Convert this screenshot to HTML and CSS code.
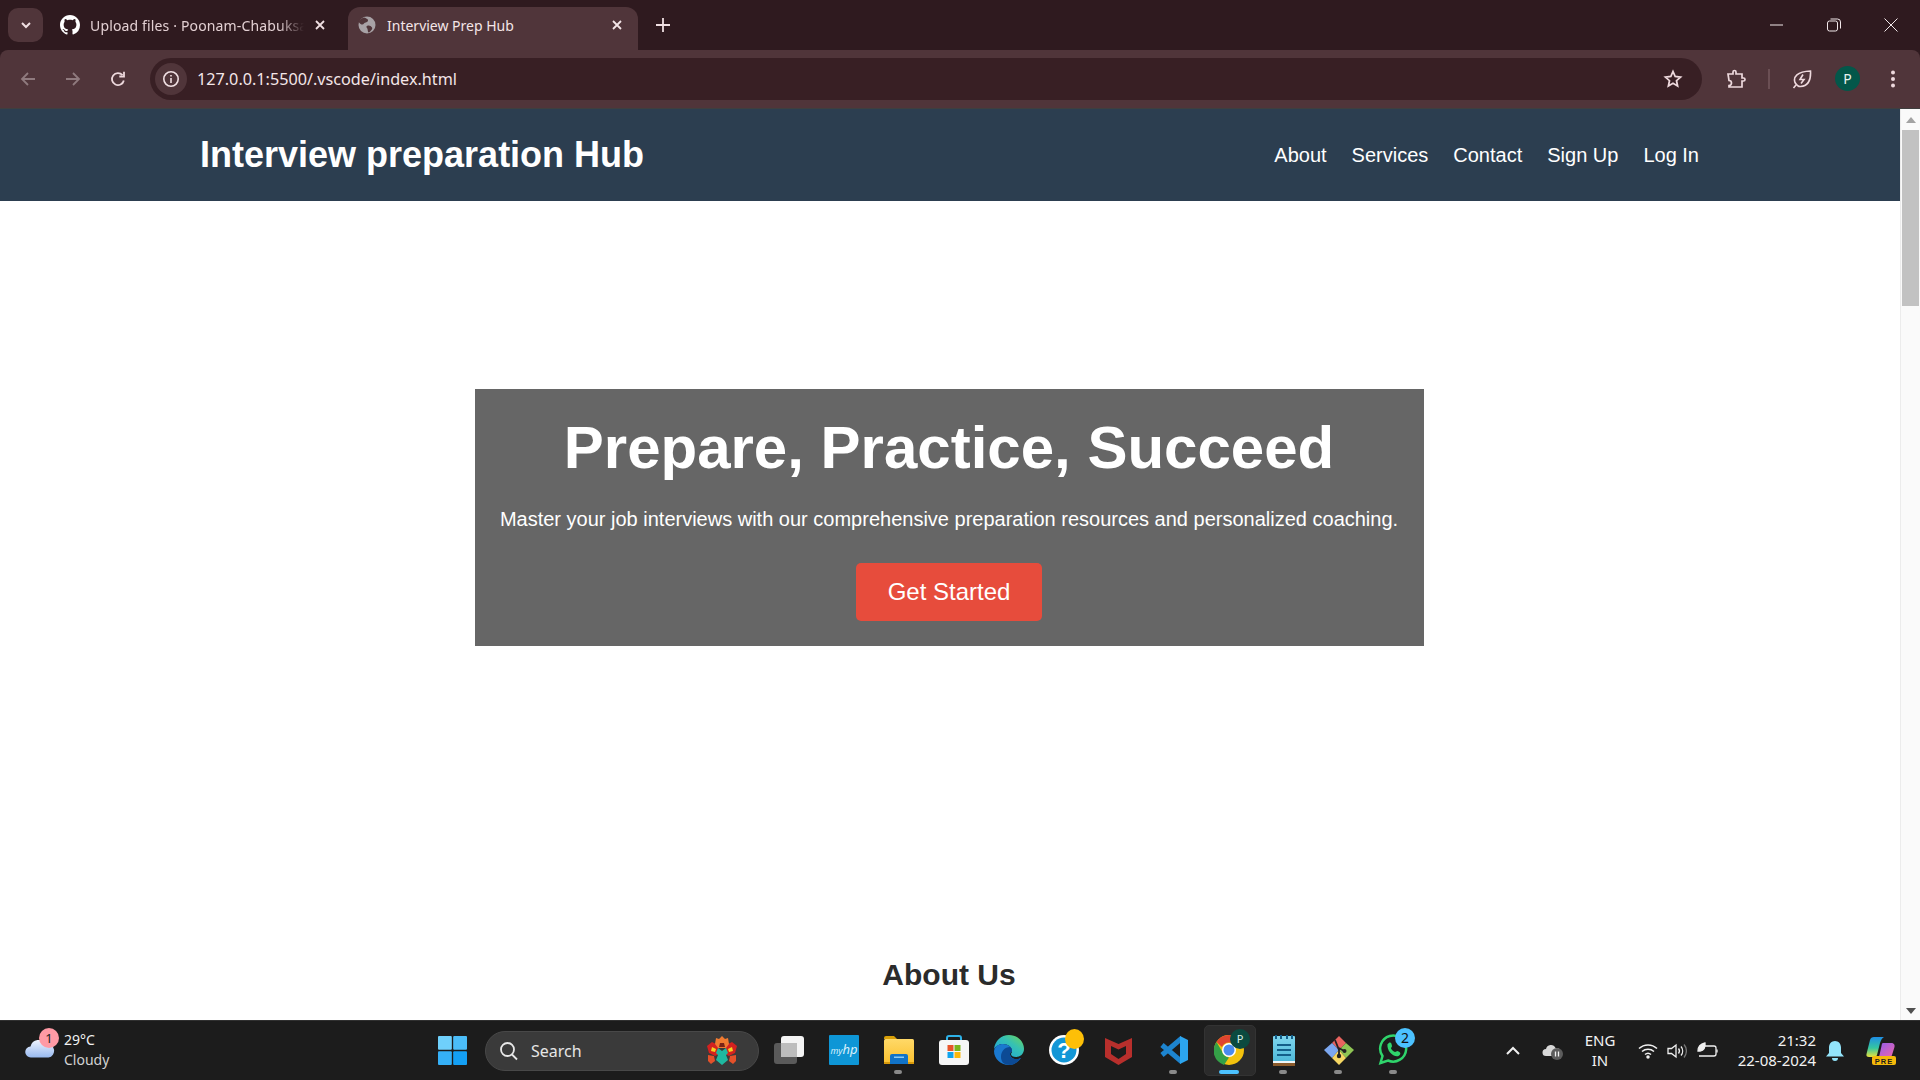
FILE: index.html
```html
<!DOCTYPE html>
<html lang="en">

<head>
    <meta charset="UTF-8">
    <title>Interview Prep Hub</title>
    <link rel="stylesheet" href="styles.css">
</head>

<body>
    <div class="tabstrip">
        <button class="tab-list">
            <svg width="14" height="14" viewBox="0 0 14 14" fill="none" stroke="#f0dfe2" stroke-width="2"><path d="M3 5l4 4 4-4" /></svg>
        </button>
        <div class="tab">
            <svg class="favicon" width="20" height="20" viewBox="0 0 16 16" fill="#fff"><path d="M8 0C3.58 0 0 3.58 0 8c0 3.54 2.29 6.53 5.47 7.59.4.07.55-.17.55-.38 0-.19-.01-.82-.01-1.49-2.01.37-2.53-.49-2.69-.94-.09-.23-.48-.94-.82-1.13-.28-.15-.68-.52-.01-.53.63-.01 1.08.58 1.23.82.72 1.21 1.87.87 2.33.66.07-.52.28-.87.51-1.07-1.78-.2-3.64-.89-3.64-3.95 0-.87.31-1.59.82-2.15-.08-.2-.36-1.02.08-2.12 0 0 .67-.21 2.2.82.64-.18 1.32-.27 2-.27s1.36.09 2 .27c1.53-1.04 2.2-.82 2.2-.82.44 1.1.16 1.92.08 2.12.51.56.82 1.27.82 2.15 0 3.07-1.87 3.75-3.65 3.95.29.25.54.73.54 1.48 0 1.07-.01 1.93-.01 2.2 0 .21.15.46.55.38A8.01 8.01 0 0 0 16 8c0-4.42-3.58-8-8-8z" /></svg>
            <span class="tab-title tab-title-faded">Upload files · Poonam-Chabuksar</span>
            <svg class="tab-close" width="12" height="12" viewBox="0 0 12 12" stroke="#f0dfe2" stroke-width="1.8"><path d="M2 2l8 8M10 2l-8 8" /></svg>
        </div>
        <div class="tab tab-active">
            <svg class="favicon" width="18" height="18" viewBox="0 0 18 18"><circle cx="9" cy="9" r="8.500" fill="#a8a2a6" /><path d="M6 1.500c2 1 4 1 4 3S7 6 6 7.500 3.500 9 1.500 7 3 2.500 6 1.500zM9 10c2-1 4 0 5 1.500s-1 3.500-3 5c-1.500 0-1-2-1.500-3.500S7.500 11 9 10z" fill="#50353a" /></svg>
            <span class="tab-title">Interview Prep Hub</span>
            <svg class="tab-close" width="12" height="12" viewBox="0 0 12 12" stroke="#f4e6e8" stroke-width="1.8"><path d="M2 2l8 8M10 2l-8 8" /></svg>
        </div>
        <svg class="new-tab" width="14" height="14" viewBox="0 0 14 14" stroke="#f0dfe2" stroke-width="1.8"><path d="M7 0v14M0 7h14" /></svg>
        <div class="window-controls">
            <svg width="14" height="14" viewBox="0 0 14 14" stroke="#f2e8ea" stroke-width="1"><path d="M0 7h13" /></svg>
            <svg width="14" height="14" viewBox="0 0 14 14" fill="none" stroke="#f2e8ea" stroke-width="1"><rect x=".5" y="3" width="10" height="10" rx="2" /><path d="M3.500 1h7a3 3 0 0 1 3 3v6.500" /></svg>
            <svg width="14" height="14" viewBox="0 0 14 14" stroke="#f2e8ea" stroke-width="1"><path d="M.5.5l13 13M13.500.5l-13 13" /></svg>
        </div>
    </div>

    <div class="toolbar">
        <div class="nav-buttons">
            <svg width="18" height="18" viewBox="0 0 18 18" fill="none" stroke="#8f7a7e" stroke-width="1.800"><path d="M16 9H3M9 3L3 9l6 6" /></svg>
            <svg width="18" height="18" viewBox="0 0 18 18" fill="none" stroke="#8f7a7e" stroke-width="1.800"><path d="M2 9h13M9 3l6 6-6 6" /></svg>
            <svg width="18" height="18" viewBox="0 0 18 18" fill="none" stroke="#eed9dd" stroke-width="1.800"><path d="M14.800 10.500a6 6 0 1 1-1.300-5.300" /><path d="M15 1.800v4.700h-4.700" /></svg>
        </div>
        <div class="omnibox">
            <span class="site-info">
                <svg width="18" height="18" viewBox="0 0 18 18" fill="none" stroke="#f0dfe2" stroke-width="1.600"><circle cx="9" cy="9" r="7.200" /><path d="M9 8v5M9 5v1.600" /></svg>
            </span>
            <span class="url">127.0.0.1:5500/.vscode/index.html</span>
            <svg class="star" width="20" height="20" viewBox="0 0 20 20" fill="none" stroke="#eed9dd" stroke-width="1.800"><path d="M10 2.500l2.200 5 5.300.6-4 3.600 1.100 5.300-4.600-2.700-4.600 2.700 1.100-5.300-4-3.600 5.300-.6z" /></svg>
        </div>
        <div class="toolbar-actions">
            <svg class="puzzle" width="20" height="20" viewBox="0 0 20 20" fill="none" stroke="#eed9dd" stroke-width="1.700"><path d="M2 5h5V3a1.500 1.500 0 0 1 3 0v2h6v4h1.500a1.500 1.500 0 0 1 0 3H16v6H3v-1.500c1.500 0 2.500-1 2.500-2.500S4.500 11.500 3 11.500z" /></svg>
            <span class="toolbar-divider"></span>
            <svg class="leaf" width="20" height="20" viewBox="0 0 20 20" fill="none" stroke="#eed9dd" stroke-width="1.600"><path d="M3 13.500C1 8 5 2.500 18.500 2c.5 8-2 15-10 15.500-2 .1-3.500-.5-5.500-4z" /><path d="M1.500 19l2.500-3M11 5.500l-3 5h4l-3 4" /></svg>
            <span class="avatar">P</span>
            <svg class="dots" width="6" height="20" viewBox="0 0 6 20" fill="#eed9dd"><circle cx="3" cy="3.500" r="2" /><circle cx="3" cy="10" r="2" /><circle cx="3" cy="16.500" r="2" /></svg>
        </div>
    </div>

    <div class="viewport">
        <div class="page">
            <header class="site-header">
                <div class="header-inner">
                    <h1 class="logo">Interview preparation Hub</h1>
                    <nav class="site-nav">
                        <a href="#">About</a>
                        <a href="#">Services</a>
                        <a href="#">Contact</a>
                        <a href="#">Sign Up</a>
                        <a href="#">Log In</a>
                    </nav>
                </div>
            </header>
            <section class="hero">
                <div class="hero-box">
                    <h2>Prepare, Practice, Succeed</h2>
                    <p>Master your job interviews with our comprehensive preparation resources and personalized coaching.</p>
                    <a class="btn" href="#">Get Started</a>
                </div>
            </section>
            <section class="about">
                <h2>About Us</h2>
            </section>
        </div>
        <div class="scrollbar">
            <span class="arrow-up"></span>
            <span class="thumb"></span>
            <span class="arrow-down"></span>
        </div>
    </div>

    <div class="taskbar">
        <div class="weather">
            <svg class="weather-icon" width="30" height="20" viewBox="0 0 30 20">
                <defs>
                    <linearGradient id="cloudFill" x1="0" y1="0" x2="0" y2="1">
                        <stop offset="0" stop-color="#eef4ff" />
                        <stop offset="1" stop-color="#98b9ef" />
                    </linearGradient>
                </defs>
                <path d="M6 19.500a5.500 5.500 0 0 1-.5-11A8.500 8.500 0 0 1 21 6a6.800 6.800 0 0 1 2.500 13.500z" fill="url(#cloudFill)" />
            </svg>
            <span class="weather-badge">1</span>
            <div class="weather-text">
                <span>29°C</span>
                <span class="weather-desc">Cloudy</span>
            </div>
        </div>
        <div class="start">
            <svg width="29" height="29" viewBox="0 0 30 30">
                <rect width="14.300" height="14.300" rx="1" fill="#6fd0fb" />
                <rect x="15.700" width="14.300" height="14.300" rx="1" fill="#4bbdf8" />
                <rect y="15.700" width="14.300" height="14.300" rx="1" fill="#35b0f7" />
                <rect x="15.700" y="15.700" width="14.300" height="14.300" rx="1" fill="#14a0f5" />
            </svg>
        </div>
        <div class="search">
            <svg width="20" height="20" viewBox="0 0 20 20" fill="none" stroke="#e8e8e8" stroke-width="1.800"><circle cx="8.500" cy="8.500" r="6.500" /><path d="M13 13.500l5 5" /></svg>
            <span>Search</span>
            <svg class="doodle" width="34" height="30" viewBox="0 0 34 30">
                <path d="M2 10l5-4 6 3 1 9-4 2-6-3z" fill="#d3211f" />
                <path d="M32 10l-5-4-6 3-1 9 4 2 6-3z" fill="#d3211f" />
                <path d="M11 2l3 1 3-3 3 3 3-1 1 6-3 4h-8l-3-4z" fill="#f07a30" />
                <path d="M15 7h4l1 4h-6z" fill="#7a2316" />
                <path d="M7 11l4 2-1 3-4-1z" fill="#f6d21f" />
                <path d="M27 11l-4 2 1 3 4-1z" fill="#f6d21f" />
                <path d="M13 12l4 3 4-3 2 5-2 2 2 5-6 5-6-5 2-5-2-2z" fill="#1fb8a0" />
                <path d="M3 19l6 1 1 5-4 3-3-3z" fill="#e4512a" />
                <path d="M31 19l-6 1-1 5 4 3 3-3z" fill="#e4512a" />
            </svg>
        </div>
        <div class="apps">
            <div class="app">
                <svg width="30" height="28" viewBox="0 0 30 28">
                    <rect x="0" y="7" width="23" height="21" rx="3" fill="#5a5a5a" />
                    <rect x="7" y="0" width="23" height="21" rx="3" fill="#f4f4f4" />
                    <rect x="7" y="7" width="16" height="14" fill="#bdbdbd" />
                </svg>
            </div>
            <div class="app">
                <svg width="30" height="30" viewBox="0 0 30 30"><rect width="30" height="30" rx="1" fill="#0e96d6" /><text x="15" y="19" class="myhp">my<tspan class="myhp-hp">hp</tspan></text></svg>
            </div>
            <div class="app app-open">
                <svg width="30" height="28" viewBox="0 0 30 28">
                    <defs>
                        <linearGradient id="folderFill" x1="0" y1="0" x2="0" y2="1">
                            <stop offset="0" stop-color="#ffd968" />
                            <stop offset="1" stop-color="#fbc02d" />
                        </linearGradient>
                    </defs>
                    <path d="M0 2a2 2 0 0 1 2-2h8l3 3h-13z" fill="#d9a008" />
                    <rect y="3" width="30" height="25" rx="1.500" fill="url(#folderFill)" />
                    <rect y="26" width="30" height="2" fill="#d99a0b" />
                    <path d="M6 20a2 2 0 0 1 2-2h14a2 2 0 0 1 2 2v8H6z" fill="#1173c8" />
                    <rect x="10" y="20.500" width="10" height="1.500" fill="#8ccbf3" />
                </svg>
                <span class="app-dot"></span>
            </div>
            <div class="app">
                <svg width="30" height="30" viewBox="0 0 30 30">
                    <path d="M8 8V3a2 2 0 0 1 2-2h10a2 2 0 0 1 2 2v5" fill="none" stroke="#2eb2e8" stroke-width="2" />
                    <rect y="5" width="30" height="25" rx="3" fill="#f6f6f6" />
                    <rect x="8.500" y="10" width="6" height="6" fill="#e8542a" />
                    <rect x="15.500" y="10" width="6" height="6" fill="#7ab51d" />
                    <rect x="8.500" y="17" width="6" height="6" fill="#10a4ee" />
                    <rect x="15.500" y="17" width="6" height="6" fill="#fbb80e" />
                </svg>
            </div>
            <div class="app">
                <svg width="30" height="30" viewBox="0 0 30 30">
                    <defs>
                        <linearGradient id="edgeTop" x1="0" y1="1" x2="1" y2="0">
                            <stop offset="0" stop-color="#1b9de2" />
                            <stop offset=".6" stop-color="#35c1b4" />
                            <stop offset="1" stop-color="#6fd655" />
                        </linearGradient>
                    </defs>
                    <path d="M15 0c8 0 15 6 15 14 0 5-4 8-8 8-3 0-5-1-5-3 0-1 1-1 1-3 0-4-4-7-9-7-4 0-7 2-9 5C1 6 7 0 15 0z" fill="url(#edgeTop)" />
                    <path d="M0 16c1-6 6-7 9-7 5 0 9 3 9 7 0 .5-2 1-2 3 0 3 3 5 6 5 1 0 3 0 5-1-3 4-7 7-12 7C7 30 0 24 0 16z" fill="#1a78cf" />
                    <path d="M7 22c0-6 4-10 9-10 1 .5 2 2 2 4 0 1-2 1.500-2 3 0 3 3 5 6 5 2 0 3 0 5-1-3 4-7 7-11 7-6 0-9-3-9-8z" fill="#0c4a95" />
                </svg>
            </div>
            <div class="app">
                <svg class="help-icon" width="35" height="36" viewBox="0 0 35 36">
                    <circle cx="15" cy="21" r="15" fill="#fff" />
                    <circle cx="15" cy="21" r="12.500" fill="#1296d6" />
                    <text x="15" y="29" class="help-mark">?</text>
                    <ellipse cx="25.500" cy="10" rx="9.500" ry="10" fill="#fdbf07" />
                </svg>
            </div>
            <div class="app">
                <svg width="27" height="30" viewBox="0 0 27 30"><path d="M0 3l13.500 6L27 3v19l-13.500 8L0 22z" fill="#b82f2c" /><path d="M6 11l7.500 3.500L21 11v8l-7.500 5L6 19z" fill="#1c1c1c" /></svg>
            </div>
            <div class="app app-open">
                <svg width="30" height="30" viewBox="0 0 30 30" fill="none">
                    <path d="M23 3L3 20M3 10l20 17" stroke="#1d84cf" stroke-width="5" />
                    <path d="M21 1l8 4v20l-8 4z" fill="#2ca5ef" />
                </svg>
                <span class="app-dot"></span>
            </div>
            <div class="app app-active">
                <svg width="30" height="30" viewBox="0 0 30 30"><circle cx="15" cy="15" r="15" fill="#f4c20d" /><path d="M15 0a15 15 0 0 1 13 7.500H15a7.500 7.500 0 0 0-7 4.500L2.500 7A15 15 0 0 1 15 0z" fill="#e0442f" /><path d="M2.500 7L9 18a7.500 7.500 0 0 0 6 4.500L10 30A15 15 0 0 1 2.500 7z" fill="#34a047" /><circle cx="15" cy="15" r="7" fill="#fff" /><circle cx="15" cy="15" r="5.500" fill="#4a8bf0" /></svg>
                <span class="chrome-profile">P</span>
                <span class="app-bar"></span>
            </div>
            <div class="app app-open">
                <svg width="22" height="31" viewBox="0 0 22 31">
                    <defs>
                        <linearGradient id="noteFill" x1="0" y1="0" x2="0" y2="1">
                            <stop offset="0" stop-color="#7fd6ee" />
                            <stop offset="1" stop-color="#45b4d6" />
                        </linearGradient>
                    </defs>
                    <rect y="1" width="22" height="30" rx="1" fill="url(#noteFill)" />
                    <rect y="26" width="22" height="2" fill="#eef6f8" />
                    <rect y="28" width="22" height="3" fill="#8a5a2b" />
                    <path d="M4 10h14M4 15h14M4 20h14" stroke="#135f8a" stroke-width="2.200" />
                    <path d="M3 0v4M8 0v4M14 0v4M19 0v4" stroke="#135f8a" stroke-width="2" />
                </svg>
                <span class="app-dot"></span>
            </div>
            <div class="app app-open">
                <svg width="30" height="30" viewBox="0 0 30 30"><path d="M15 1l7 7-7 7-7-7z" fill="#e8635f" /><path d="M8 8l7 7-7 8-8-8z" fill="#7ca7ef" /><path d="M22 8l8 7-8 8-7-8z" fill="#8ec454" /><path d="M15 15l7 8-7 7-7-7z" fill="#f6d763" /><path d="M11 5l4 10v6M15 13l5 3" stroke="#222" stroke-width="1.800" fill="none" /><circle cx="15" cy="21" r="2.200" fill="#222" /><circle cx="20.500" cy="16" r="2" fill="#222" /></svg>
                <span class="app-dot"></span>
            </div>
            <div class="app app-open">
                <svg width="32" height="32" viewBox="0 0 32 32" fill="none"><path d="M2.500 29l2-7A13 13 0 1 1 10 26.500z" stroke="#2fd46b" stroke-width="2.500" /><path d="M10 10c1-2 3-2 3.500 0l.5 2c0 1-1 1.500-1 2.500 1 2 2.500 3 4 3.500 1 0 1.500-1 2.500-1l2 1c1.500 1 1 3-1 4-5 1.500-12-5-11-12z" fill="#2fd46b" /></svg>
                <span class="wa-badge">2</span>
                <span class="app-dot"></span>
            </div>
        </div>
        <div class="tray">
            <svg class="tray-chevron" width="16" height="10" viewBox="0 0 16 10" fill="none" stroke="#f0f0f0" stroke-width="2"><path d="M2 8l6-6 6 6" /></svg>
            <svg class="tray-cloud" width="22" height="18" viewBox="0 0 22 18"><path d="M4 14a3.500 3.500 0 0 1 0-7 5 5 0 0 1 9.500-1A4 4 0 0 1 15 14z" fill="#d8d8d8" /><circle cx="15" cy="12" r="6" fill="#5c5c5c" /><path d="M13.500 9.500v5M16.500 9.500v5" stroke="#f0f0f0" stroke-width="1.300" /></svg>
            <div class="tray-lang">
                <span>ENG</span>
                <span>IN</span>
            </div>
            <svg class="tray-wifi" width="20" height="16" viewBox="0 0 20 16" fill="none" stroke="#f0f0f0" stroke-width="1.500"><path d="M1 5.500a13 13 0 0 1 18 0M4 8.500a9 9 0 0 1 12 0M7 11.500a4.500 4.500 0 0 1 6 0" /><circle cx="10" cy="14" r="1" fill="#f0f0f0" /></svg>
            <svg class="tray-volume" width="20" height="18" viewBox="0 0 20 18" fill="none" stroke="#f0f0f0" stroke-width="1.300"><path d="M1 6.500h3.500L9 3v12l-4.500-3.500H1z" /><path d="M11.500 6.500a4 4 0 0 1 0 5M14 4.500a7 7 0 0 1 0 9" /><path d="M17 2.500a10 10 0 0 1 0 13" stroke="#777" /></svg>
            <svg class="tray-battery" width="22" height="18" viewBox="0 0 22 18" fill="none" stroke="#f0f0f0" stroke-width="1.300"><path d="M8 4h9a2 2 0 0 1 2 2v6a2 2 0 0 1-2 2H2" /><path d="M20 7.500v3" /><path d="M1 9c0-4 3-7 7-8 .5 4-.5 7-5 8z" fill="#f0f0f0" /></svg>
            <div class="clock">
                <span>21:32</span>
                <span>22-08-2024</span>
            </div>
            <svg class="tray-bell" width="18" height="20" viewBox="0 0 18 20"><path d="M9 0c3.500 0 6 2.800 6 6.500V12l3 3.500H0L3 12V6.500C3 2.800 5.500 0 9 0z" fill="#93e4fb" /><path d="M6 17h6a3 3 0 0 1-6 0z" fill="#93e4fb" /></svg>
            <svg class="tray-copilot" width="30" height="28" viewBox="0 0 30 28">
                <defs>
                    <linearGradient id="copilotLeft" x1="0" y1="0" x2="0" y2="1">
                        <stop offset="0" stop-color="#1f8fe6" />
                        <stop offset=".55" stop-color="#35c6a0" />
                        <stop offset="1" stop-color="#e9e23a" />
                    </linearGradient>
                    <linearGradient id="copilotRight" x1="0" y1="0" x2="1" y2="1">
                        <stop offset="0" stop-color="#8a5cf0" />
                        <stop offset="1" stop-color="#f266a8" />
                    </linearGradient>
                </defs>
                <path d="M8 0h10c-2 1-3 3-4 6l-3 12c-.5 1-1 2-3 2H3c-2 0-3-1-2.500-3L4 3c.5-2 2-3 4-3z" fill="url(#copilotLeft)" />
                <path d="M17 6h8c3 0 4 2 3.500 4L26 18c-.5 2-2 3-4 3H10c2 0 3-1 3.500-3l2-9c.2-1.500.5-3 1.500-3z" fill="url(#copilotRight)" />
                <rect x="6" y="19" width="24" height="9" rx="2" fill="#f5b90a" />
                <text x="18" y="26.500" class="pre-label">PRE</text>
            </svg>
        </div>
    </div>
</body>

</html>
```

FILE: styles.css
```css
* {
    box-sizing: border-box;
}

html,
body {
    height: 100%;
}

body {
    margin: 0;
    display: flex;
    flex-direction: column;
    overflow: hidden;
    font-family: 'Liberation Sans', Arial, sans-serif;
    background: #2f1a1f;
}

/* browser tabs */
.tabstrip {
    height: 50px;
    flex: none;
    display: flex;
    align-items: flex-end;
    background: #2f1a1f;
    font-family: 'Noto Sans', sans-serif;
    font-size: 14px;
    padding-left: 8px;
}

.tab-list {
    width: 35px;
    height: 34px;
    margin: 0 9px 8px 0;
    padding: 0;
    border: none;
    border-radius: 10px;
    background: #50353a;
    display: flex;
    align-items: center;
    justify-content: center;
}

.tab {
    width: 296px;
    height: 43px;
    flex: none;
    display: flex;
    align-items: center;
    gap: 10px;
    padding: 0 22px 7px 8px;
    border-radius: 12px 12px 0 0;
    color: #e3d0d3;
}

.tab-active {
    width: 290px;
    padding: 0 15px 7px 10px;
    background: #50353a;
    color: #f4e6e8;
    gap: 11px;
}

.tab-title {
    flex: 1;
    white-space: nowrap;
    overflow: hidden;
}

.tab-title-faded {
    letter-spacing: .15px;
    mask-image: linear-gradient(to right, #000 88%, transparent);
}

.new-tab {
    margin: 0 0 18px 18px;
}

.window-controls {
    margin: 0 22px 18px auto;
    display: flex;
    gap: 43px;
}

/* address bar */
.toolbar {
    height: 59px;
    flex: none;
    display: flex;
    align-items: center;
    background: #50353a;
    border-bottom: 1px solid #3f3f3f;
    border-top-left-radius: 8px;
    border-top-right-radius: 8px;
    padding-bottom: 1px;
}

.nav-buttons {
    width: 150px;
    display: flex;
    gap: 27px;
    padding-left: 19px;
}

.omnibox {
    width: 1552px;
    height: 42px;
    display: flex;
    align-items: center;
    background: #381f24;
    border-radius: 21px;
    padding: 0 19px 0 5px;
}

.site-info {
    width: 32px;
    height: 32px;
    border-radius: 50%;
    background: #50353a;
    display: flex;
    align-items: center;
    justify-content: center;
}

.url {
    flex: 1;
    margin-left: 10px;
    color: #f4e6e8;
    font-family: 'Noto Sans', sans-serif;
    font-size: 16.2px;
}

.toolbar-actions {
    flex: 1;
    display: flex;
    align-items: center;
    padding-left: 24px;
}

.toolbar-divider {
    width: 2px;
    height: 20px;
    margin: 0 22px;
    background: #6b4f54;
}

.avatar {
    width: 25px;
    height: 25px;
    margin-left: 23px;
    border-radius: 50%;
    background: #03574a;
    color: #e8f3f0;
    font-family: 'Noto Sans', sans-serif;
    font-size: 14px;
    line-height: 25px;
    text-align: center;
}

.dots {
    margin-left: 30px;
}

/* page */
.viewport {
    flex: 1;
    min-height: 0;
    display: flex;
    background: #fff;
}

.page {
    flex: 1;
    min-width: 0;
    overflow: hidden;
    background: #fff;
}

.site-header {
    height: 92px;
    background: #2c3e50;
    color: #fff;
}

.header-inner {
    width: 1499px;
    height: 100%;
    margin-left: 200px;
    display: flex;
    align-items: center;
    justify-content: space-between;
}

.logo {
    margin: 0;
    font-size: 36px;
    font-weight: 700;
}

.site-nav {
    display: flex;
    gap: 25px;
}

.site-nav a {
    color: #fff;
    text-decoration: none;
    font-size: 20px;
}

.hero {
    padding: 188px 2px 0 0;
    display: flex;
    justify-content: center;
}

.hero-box {
    width: 949px;
    height: 257px;
    padding-top: 25px;
    background: #666;
    color: #fff;
    text-align: center;
}

.hero-box h2 {
    margin: 0;
    font-size: 60px;
    line-height: 68px;
}

.hero-box p {
    margin: 26px 0 0;
    font-size: 20px;
    line-height: 23px;
}

.btn {
    display: inline-block;
    margin-top: 32px;
    padding: 15px 32px;
    border-radius: 5px;
    background: #e74c3c;
    color: #fff;
    font-size: 24px;
    line-height: 28px;
    text-decoration: none;
}

.about {
    padding: 312px 2px 0 0;
    text-align: center;
}

.about h2 {
    margin: 0;
    color: #2b2b2b;
    font-size: 30px;
    line-height: 34px;
}

.scrollbar {
    width: 20px;
    flex: none;
    display: flex;
    flex-direction: column;
    align-items: center;
    background: #fafafa;
    border-left: 1px solid #ececec;
}

.arrow-up {
    margin: 8px 0 7px;
    border: 5px solid transparent;
    border-top: none;
    border-bottom: 6px solid #a3a3a3;
}

.thumb {
    width: 17px;
    height: 176px;
    background: #c2c2c2;
}

.arrow-down {
    margin: auto 0 6px;
    border: 5px solid transparent;
    border-bottom: none;
    border-top: 6px solid #505050;
}

/* windows taskbar */
.taskbar {
    height: 60px;
    flex: none;
    display: flex;
    align-items: center;
    background: #1c1c1c;
    border-top: 1px solid #303030;
    color: #f2f2f2;
    font-family: 'Noto Sans', sans-serif;
    font-size: 14px;
}

.weather {
    width: 438px;
    display: flex;
    position: relative;
    padding-left: 25px;
}

.weather-icon {
    margin-top: 8px;
}

.weather-badge {
    position: absolute;
    left: 39px;
    top: -2px;
    width: 20px;
    height: 20px;
    border-radius: 50%;
    background: #ff9aa5;
    color: #222;
    font-size: 13px;
    line-height: 20px;
    text-align: center;
}

.weather-text {
    margin-left: 9px;
    padding-bottom: 2px;
    display: flex;
    flex-direction: column;
    line-height: 20px;
}

.weather-desc {
    color: #d2d2d2;
}

.start {
    width: 47px;
    display: flex;
    align-items: center;
}

.search {
    width: 274px;
    height: 40px;
    display: flex;
    align-items: center;
    padding: 0 19px 0 13px;
    background: #3a3a3a;
    border: 1px solid #484848;
    border-radius: 20px;
    color: #e6e6e6;
    font-size: 16px;
}

.search span {
    margin-left: 12px;
}

.doodle {
    margin-left: auto;
}

.apps {
    display: flex;
    margin-left: 2px;
}

.app {
    width: 55px;
    height: 59px;
    padding-bottom: 1px;
    position: relative;
    isolation: isolate;
    display: flex;
    align-items: center;
    justify-content: center;
}

.help-icon {
    margin: -6px 0 0 5px;
}

.app-dot {
    position: absolute;
    left: 23px;
    bottom: 6px;
    width: 8px;
    height: 4px;
    border-radius: 2px;
    background: #8a8a8a;
}

.app-active::before {
    content: '';
    position: absolute;
    left: 3px;
    top: 4px;
    width: 50px;
    height: 49px;
    z-index: -1;
    background: #2b2b2b;
    border: 1px solid #333;
    border-radius: 5px;
}

.app-bar {
    position: absolute;
    left: 18px;
    bottom: 6px;
    width: 20px;
    height: 4px;
    border-radius: 2px;
    background: #4cc2ff;
}

.chrome-profile {
    position: absolute;
    left: 29px;
    top: 8px;
    width: 20px;
    height: 20px;
    border-radius: 50%;
    background: #0b4a3f;
    color: #d9ece7;
    font-size: 11px;
    line-height: 20px;
    text-align: center;
}

.wa-badge {
    position: absolute;
    left: 29px;
    top: 7px;
    width: 20px;
    height: 20px;
    border-radius: 50%;
    background: #4cc2ff;
    color: #111;
    font-size: 14px;
    line-height: 20px;
    text-align: center;
}

.myhp {
    fill: #d8f0fb;
    font-family: 'Noto Sans', sans-serif;
    font-size: 9px;
    font-style: italic;
    text-anchor: middle;
}

.myhp-hp {
    font-size: 13px;
}

.help-mark {
    fill: #fff;
    font-family: 'Liberation Sans', sans-serif;
    font-size: 22px;
    font-weight: 700;
    text-anchor: middle;
}

.pre-label {
    fill: #1c1c1c;
    font-family: 'Liberation Sans', sans-serif;
    font-size: 7.500px;
    font-weight: 700;
    letter-spacing: 1px;
    text-anchor: middle;
}

.tray {
    flex: 1;
    display: flex;
    align-items: center;
}

.tray-chevron {
    margin-left: 84px;
}

.tray-cloud {
    margin-left: 21px;
}

.tray-lang {
    width: 40px;
    margin-left: 16px;
    padding-bottom: 2px;
    display: flex;
    flex-direction: column;
    align-items: center;
    line-height: 20px;
    font-size: 15px;
}

.tray-wifi {
    margin-left: 18px;
}

.tray-volume {
    margin-left: 9px;
}

.tray-battery {
    margin-left: 10px;
}

.clock {
    width: 90px;
    margin-left: 7px;
    padding-bottom: 2px;
    display: flex;
    flex-direction: column;
    align-items: flex-end;
    line-height: 20px;
    font-size: 15px;
}

.tray-bell {
    margin-left: 10px;
}

.tray-copilot {
    margin-left: 22px;
}
```
